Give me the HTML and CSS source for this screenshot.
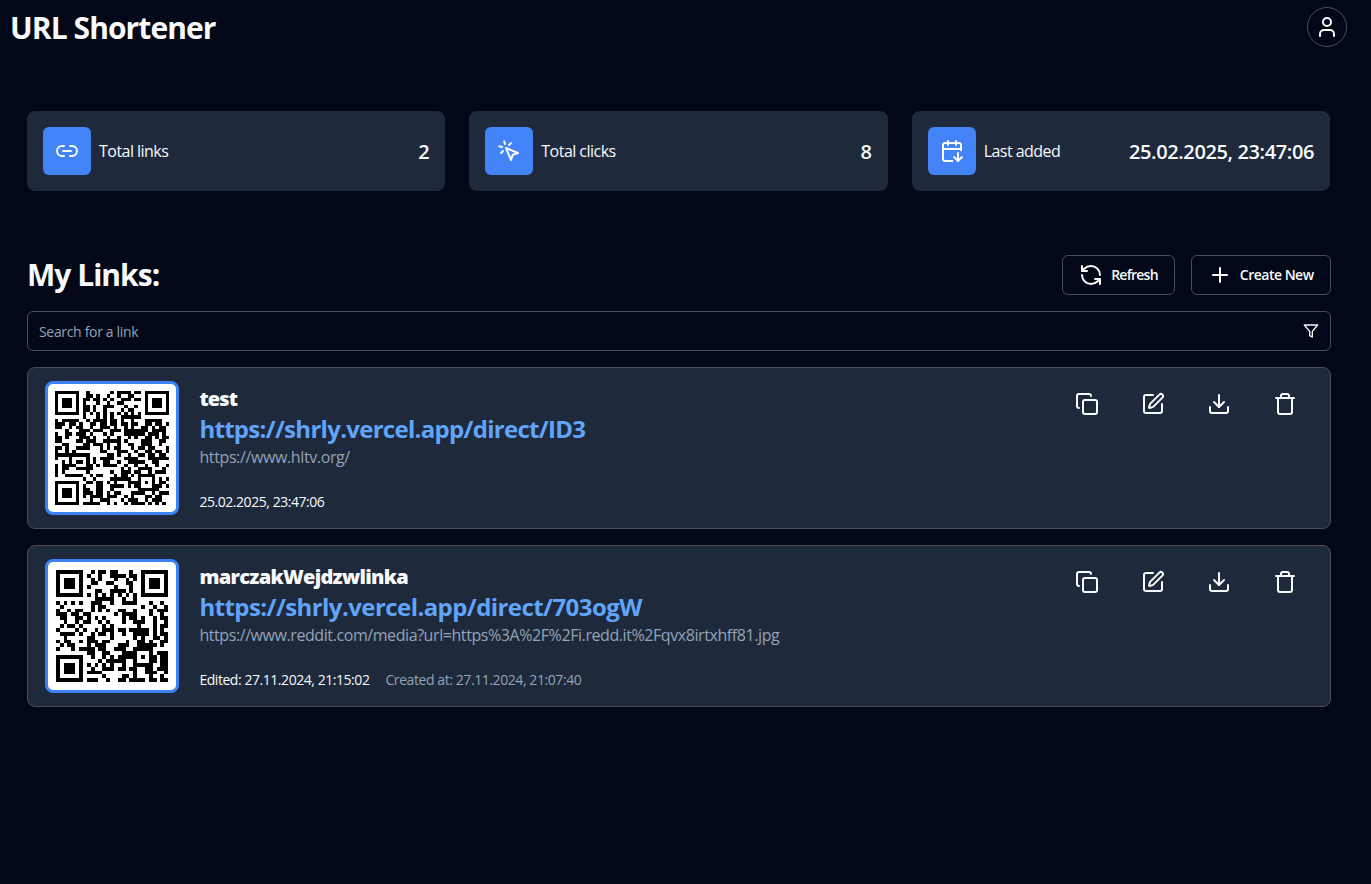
FILE: index.html
```html
<!DOCTYPE html>
<html lang="en">
<head>
<meta charset="utf-8">
<title>URL Shortener</title>
<link rel="stylesheet" href="styles.css">
</head>
<body>
<svg class="sprite" aria-hidden="true">
  <symbol id="copy" viewBox="0 0 24 24"><rect width="14" height="14" x="8" y="8" rx="2"/><path d="M4 16c-1.1 0-2-.9-2-2V4c0-1.1.9-2 2-2h10c1.1 0 2 .9 2 2"/></symbol>
  <symbol id="edit" viewBox="0 0 24 24"><path d="M12 3H5a2 2 0 0 0-2 2v14a2 2 0 0 0 2 2h14a2 2 0 0 0 2-2v-7"/><path d="M18.375 2.625a1 1 0 0 1 3 3l-9.013 9.014a2 2 0 0 1-.853.505l-2.873.84a.5.5 0 0 1-.62-.62l.84-2.873a2 2 0 0 1 .506-.852z"/></symbol>
  <symbol id="download" viewBox="0 0 24 24"><path d="M21 15v4a2 2 0 0 1-2 2H5a2 2 0 0 1-2-2v-4"/><path d="m7 10 5 5 5-5"/><path d="M12 15V3"/></symbol>
  <symbol id="trash" viewBox="0 0 24 24"><path d="M3 6h18"/><path d="M19 6v14c0 1-1 2-2 2H7c-1 0-2-1-2-2V6"/><path d="M8 6V4c0-1 1-2 2-2h4c1 0 2 1 2 2v2"/></symbol>
</svg>
<header class="header">
  <h1 class="brand">URL Shortener</h1>
  <button class="avatar" aria-label="Account"><svg class="icon" viewBox="0 0 24 24"><path d="M19 21v-2a4 4 0 0 0-4-4H9a4 4 0 0 0-4 4v2"/><circle cx="12" cy="7" r="4"/></svg></button>
</header>
<main class="main">
  <section class="stats">
    <div class="stat">
      <span class="stat-icon"><svg class="icon" viewBox="0 0 24 24"><path d="M9 17H7A5 5 0 0 1 7 7h2"/><path d="M15 7h2a5 5 0 1 1 0 10h-2"/><path d="M8 12h8"/></svg></span>
      <span class="stat-label">Total links</span><span class="stat-value">2</span>
    </div>
    <div class="stat">
      <span class="stat-icon"><svg class="icon" viewBox="0 0 24 24"><path d="m9 9 5 12 1.8-5.2L21 14Z"/><path d="M7.2 2.2 8 5.1"/><path d="m5.1 8-2.9-.8"/><path d="M14 4.1 12 6"/><path d="m6 12-1.9 2"/></svg></span>
      <span class="stat-label">Total clicks</span><span class="stat-value">8</span>
    </div>
    <div class="stat">
      <span class="stat-icon"><svg class="icon" viewBox="0 0 24 24"><path d="m14 18 4 4 4-4"/><path d="M16 2v4"/><path d="M18 14v8"/><path d="M21 11.354V6a2 2 0 0 0-2-2H5a2 2 0 0 0-2 2v14a2 2 0 0 0 2 2h7.343"/><path d="M3 10h18"/><path d="M8 2v4"/></svg></span>
      <span class="stat-label">Last added</span><span class="stat-value">25.02.2025, 23:47:06</span>
    </div>
  </section>
  <div class="toolbar">
    <h2 class="heading">My Links:</h2>
    <div class="buttons">
      <button class="button refresh"><svg class="icon" viewBox="0 0 24 24"><path d="M21 12a9 9 0 0 0-9-9 9.75 9.75 0 0 0-6.74 2.74L3 8"/><path d="M3 3v5h5"/><path d="M3 12a9 9 0 0 0 9 9 9.75 9.75 0 0 0 6.74-2.74L21 16"/><path d="M16 16h5v5"/></svg><span>Refresh</span></button>
      <button class="button"><svg class="icon" viewBox="0 0 24 24"><path d="M5 12h14"/><path d="M12 5v14"/></svg><span>Create New</span></button>
    </div>
  </div>
  <div class="search">
    <span class="placeholder">Search for a link</span>
    <svg class="icon filter" viewBox="0 0 24 24"><path d="M22 3H2l8 9.46V19l4 2v-8.54z"/></svg>
  </div>
  <article class="link-card">
    <svg class="qr" data-url="https://links-shortener-one.vercel.app/direct/ID3"></svg>
    <div class="info">
      <h3 class="name name-brief">test</h3>
      <a class="short short-brief">https://shrly.vercel.app/direct/ID3</a>
      <p class="long long-brief">https://www.hltv.org/</p>
      <p class="dates"><span>25.02.2025, 23:47:06</span></p>
    </div>
    <div class="actions"><svg class="icon"><use href="#copy"/></svg><svg class="icon"><use href="#edit"/></svg><svg class="icon"><use href="#download"/></svg><svg class="icon"><use href="#trash"/></svg></div>
  </article>
  <article class="link-card">
    <svg class="qr" data-url="https://shrly.vercel.app/direct/703ogW"></svg>
    <div class="info">
      <h3 class="name">marczakWejdzwlinka</h3>
      <a class="short">https://shrly.vercel.app/direct/703ogW</a>
      <p class="long">https://www.reddit.com/media?url=https%3A%2F%2Fi.redd.it%2Fqvx8irtxhff81.jpg</p>
      <p class="dates"><span>Edited: 27.11.2024, 21:15:02</span><span class="created">Created at: 27.11.2024, 21:07:40</span></p>
    </div>
    <div class="actions"><svg class="icon"><use href="#copy"/></svg><svg class="icon"><use href="#edit"/></svg><svg class="icon"><use href="#download"/></svg><svg class="icon"><use href="#trash"/></svg></div>
  </article>
</main>
<script src="qr.js"></script>
</body>
</html>
```
FILE: styles.css
```css
* { box-sizing: border-box; }
body { margin: 0; min-height: 100vh; background: #020817; color: #f8fafc; font-family: "Segoe UI", "Open Sans", "Noto Sans", sans-serif; font-size: 16px; line-height: 24px; }
h1, h2, h3, p { margin: 0; }
button { font: inherit; color: inherit; background: transparent; }
.sprite { display: none; }
.icon { width: 24px; height: 24px; flex: none; fill: none; stroke: currentColor; stroke-width: 2; stroke-linecap: round; stroke-linejoin: round; }
.header { display: flex; justify-content: space-between; align-items: center; height: 54px; padding: 0 24px 0 10px; }
.brand { font-size: 30px; line-height: 36px; font-weight: 700; letter-spacing: -0.92px; padding-top: 2px; }
.avatar { display: flex; align-items: center; justify-content: center; width: 40px; height: 40px; padding: 0; border: 1px solid #4b4d55; border-radius: 50%; }
.main { width: 1303.6px; margin: 57px 0 0 27px; }
.stats { display: grid; grid-template-columns: repeat(3, 1fr); gap: 24px; width: 1303px; }
.stat { display: flex; align-items: center; gap: 8px; height: 80px; padding: 16px; border-radius: 8px; background: #1e293b; }
.stat-icon { display: flex; align-items: center; justify-content: center; width: 48px; height: 48px; border-radius: 6px; background: #4284f7; }
.stat-label { letter-spacing: -0.53px; }
.stat-value { margin-left: auto; font-size: 20px; line-height: 28px; font-weight: 600; letter-spacing: -0.38px; padding-top: 1px; }
.toolbar { display: flex; justify-content: space-between; align-items: center; height: 40px; margin-top: 64px; }
.heading { font-size: 30px; line-height: 36px; font-weight: 700; letter-spacing: -0.98px; }
.buttons { display: flex; gap: 16px; }
.button { display: flex; align-items: center; gap: 8px; height: 40px; padding: 0 16px; border: 1px solid #4b4d55; border-radius: 6px; font-size: 14px; font-weight: 600; letter-spacing: -0.5px; white-space: nowrap; }
.refresh { letter-spacing: -0.75px; }
.search { display: flex; justify-content: space-between; align-items: center; height: 40px; margin-top: 16px; padding: 0 11px; border: 1px solid #4b4d55; border-radius: 6px; }
.placeholder { color: #94a3b8; font-size: 14px; letter-spacing: -0.33px; padding-top: 1px; }
.filter { width: 16px; height: 16px; }
.link-card { display: flex; height: 162px; margin-top: 16px; padding: 13px 33px 0 17px; border: 1px solid #4b4d55; border-radius: 8px; background: #1e293b; }
.qr { flex: none; width: 134px; height: 134px; border: 3px solid #3b82f6; border-radius: 8px; background: #fff; }
.info { flex: 1; margin-left: 20.4px; padding-top: 4px; white-space: nowrap; }
.name { font-size: 20px; line-height: 28px; font-weight: 800; letter-spacing: -0.7px; }
.name-brief { letter-spacing: -0.85px; }
.short { display: block; color: #60a5fa; font-size: 24px; line-height: 32px; font-weight: 700; letter-spacing: -0.57px; }
.short-brief { letter-spacing: -0.71px; }
.long { color: #94a3b8; line-height: 24px; letter-spacing: -0.42px; }
.long-brief { letter-spacing: -0.38px; }
.dates { display: flex; gap: 16px; margin-top: 23px; font-size: 14px; line-height: 20px; letter-spacing: -0.45px; }
.created { color: #94a3b8; letter-spacing: -0.42px; }
.actions { display: flex; gap: 42px; padding-top: 11px; }
```
FILE: qr.js
```js
// QR encoder: byte mode, level M, versions 3 and 4.
const EXP = [], LOG = [];
for (let i = 0, x = 1; i < 255; i++) { EXP[i] = x; LOG[x] = i; x <<= 1; if (x & 256) x ^= 0x11d; }
const mul = (a, b) => (a && b ? EXP[(LOG[a] + LOG[b]) % 255] : 0);

function parity(data, n) {
  let gen = [1];
  for (let i = 0; i < n; i++) {
    const next = new Array(gen.length + 1).fill(0);
    gen.forEach((g, j) => { next[j] ^= g; next[j + 1] ^= mul(g, EXP[i]); });
    gen = next;
  }
  const rem = data.concat(new Array(n).fill(0));
  for (let i = 0; i < data.length; i++) {
    const f = rem[i];
    gen.forEach((g, j) => { rem[i + j] ^= mul(g, f); });
  }
  return rem.slice(data.length);
}

const MASKS = [
  (r, c) => (r + c) % 2 === 0, (r) => r % 2 === 0, (r, c) => c % 3 === 0, (r, c) => (r + c) % 3 === 0,
  (r, c) => ((r >> 1) + Math.floor(c / 3)) % 2 === 0, (r, c) => ((r * c) % 2) + ((r * c) % 3) === 0,
  (r, c) => (((r * c) % 2) + ((r * c) % 3)) % 2 === 0, (r, c) => (((r + c) % 2) + ((r * c) % 3)) % 2 === 0,
];

function build(url, mask) {
  const v4 = url.length > 42, size = v4 ? 33 : 29;
  const blocks = v4 ? 2 : 1, per = v4 ? 32 : 44, ecc = v4 ? 18 : 26;
  let bits = "0100" + url.length.toString(2).padStart(8, "0");
  for (const ch of url) bits += ch.charCodeAt(0).toString(2).padStart(8, "0");
  bits += "0000";
  const bytes = bits.match(/.{8}/g).map((b) => parseInt(b, 2));
  for (let i = 0; bytes.length < blocks * per; i++) bytes.push(i % 2 ? 17 : 236);
  const data = [], ec = [];
  for (let b = 0; b < blocks; b++) { data.push(bytes.slice(b * per, b * per + per)); ec.push(parity(data[b], ecc)); }
  let stream = "";
  const put = (groups, n) => { for (let i = 0; i < n; i++) for (const g of groups) stream += g[i].toString(2).padStart(8, "0"); };
  put(data, per); put(ec, ecc);

  const m = Array.from({ length: size }, () => new Array(size).fill(null));
  const finder = (r0, c0) => {
    for (let r = -1; r < 8; r++) for (let c = -1; c < 8; c++) {
      if (r0 + r < 0 || c0 + c < 0 || r0 + r >= size || c0 + c >= size) continue;
      const d = Math.max(Math.abs(r - 3), Math.abs(c - 3));
      m[r0 + r][c0 + c] = d !== 2 && d !== 4;
    }
  };
  finder(0, 0); finder(0, size - 7); finder(size - 7, 0);
  for (let r = -2; r < 3; r++) for (let c = -2; c < 3; c++) m[size - 7 + r][size - 7 + c] = Math.max(Math.abs(r), Math.abs(c)) !== 1;
  for (let i = 8; i < size - 8; i++) m[6][i] = m[i][6] = i % 2 === 0;
  let rem = mask << 10;
  for (let i = 14; i >= 10; i--) if (rem & (1 << i)) rem ^= 0x537 << (i - 10);
  const fmt = ((mask << 10) | rem) ^ 0x5412;
  for (let i = 0; i < 15; i++) {
    const bit = ((fmt >> i) & 1) === 1;
    m[i < 6 ? i : i < 8 ? i + 1 : size - 15 + i][8] = bit;
    m[8][i < 8 ? size - 1 - i : i === 8 ? 7 : 14 - i] = bit;
  }
  m[size - 8][8] = true;
  let k = 0, up = true;
  for (let right = size - 1; right > 0; right -= 2) {
    if (right === 6) right--;
    for (let i = 0; i < size; i++) {
      const r = up ? size - 1 - i : i;
      for (const c of [right, right - 1]) if (m[r][c] === null) m[r][c] = (stream[k++] === "1") !== MASKS[mask](r, c);
    }
    up = !up;
  }
  return m;
}

function penalty(m) {
  const n = m.length;
  let p = 0, dark = 0;
  const lines = [...m, ...m.map((_, c) => m.map((row) => row[c]))];
  for (const l of lines) {
    const s = l.map((x) => (x ? "1" : "0")).join("");
    for (const run of s.match(/1+|0+/g)) if (run.length >= 5) p += run.length - 2;
    for (let i = 0; i + 11 <= n; i++) if (["10111010000", "00001011101"].includes(s.substr(i, 11))) p += 40;
  }
  for (let r = 0; r < n; r++) for (let c = 0; c < n; c++) {
    if (m[r][c]) dark++;
    if (r + 1 < n && c + 1 < n && m[r][c] === m[r + 1][c] && m[r][c] === m[r][c + 1] && m[r][c] === m[r + 1][c + 1]) p += 3;
  }
  return p + Math.abs(Math.ceil((dark * 100) / n / n / 5) - 10) * 10;
}

document.querySelectorAll(".qr").forEach((svg) => {
  let best = null, low = Infinity;
  for (let i = 0; i < 8; i++) {
    const m = build(svg.dataset.url, i), p = penalty(m);
    if (p < low) { low = p; best = m; }
  }
  const n = best.length;
  let d = "";
  best.forEach((row, r) => row.forEach((on, c) => { if (on) d += `M${c + 2} ${r + 2}h1v1h-1z`; }));
  svg.setAttribute("viewBox", `0 0 ${n + 4} ${n + 4}`);
  svg.setAttribute("shape-rendering", "crispEdges");
  svg.innerHTML = `<path d="${d}"/>`;
});
```
